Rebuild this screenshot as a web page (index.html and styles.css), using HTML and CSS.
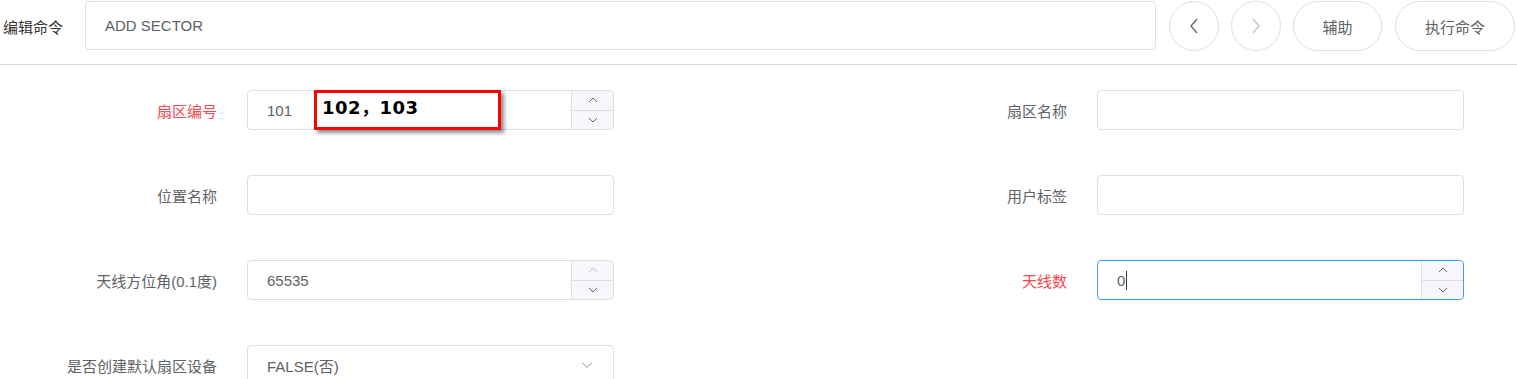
FILE: index.html
```html
<!DOCTYPE html>
<html lang="zh">
<head>
<meta charset="utf-8">
<link rel="stylesheet" href="styles.css">
</head>
<body>
<div class="topbar">
  <span class="top-label">编辑命令</span>
  <div class="cmd-input">ADD SECTOR</div>
  <button class="circle-btn"><svg width="10" height="16" viewBox="0 0 10 16"><polyline points="8,1 2,8 8,15" fill="none" stroke="#606266" stroke-width="1.3"/></svg></button>
  <button class="circle-btn disabled"><svg width="10" height="16" viewBox="0 0 10 16"><polyline points="2,1 8,8 2,15" fill="none" stroke="#c0c4cc" stroke-width="1.3"/></svg></button>
  <button class="pill-btn assist">辅助</button>
  <button class="pill-btn exec">执行命令</button>
</div>

<div class="form">
  <div class="item">
    <label class="lbl req">扇区编号</label>
    <div class="field num">
      <span class="val">101</span>
      <div class="spin">
        <span class="up"><svg width="10" height="6" viewBox="0 0 10 6"><polyline points="1,5 5,1 9,5" fill="none" stroke="#606266" stroke-width="1"/></svg></span>
        <span class="down"><svg width="10" height="6" viewBox="0 0 10 6"><polyline points="1,1 5,5 9,1" fill="none" stroke="#606266" stroke-width="1"/></svg></span>
      </div>
      <div class="note">102，103</div>
    </div>
  </div>
  <div class="item">
    <label class="lbl">扇区名称</label>
    <div class="field"></div>
  </div>

  <div class="item">
    <label class="lbl">位置名称</label>
    <div class="field"></div>
  </div>
  <div class="item">
    <label class="lbl">用户标签</label>
    <div class="field"></div>
  </div>

  <div class="item">
    <label class="lbl">天线方位角(0.1度)</label>
    <div class="field num">
      <span class="val">65535</span>
      <div class="spin">
        <span class="up"><svg width="10" height="6" viewBox="0 0 10 6"><polyline points="1,5 5,1 9,5" fill="none" stroke="#c0c4cc" stroke-width="1"/></svg></span>
        <span class="down"><svg width="10" height="6" viewBox="0 0 10 6"><polyline points="1,1 5,5 9,1" fill="none" stroke="#606266" stroke-width="1"/></svg></span>
      </div>
    </div>
  </div>
  <div class="item">
    <label class="lbl req">天线数</label>
    <div class="field num focus">
      <span class="val">0<span class="caret"></span></span>
      <div class="spin">
        <span class="up"><svg width="10" height="6" viewBox="0 0 10 6"><polyline points="1,5 5,1 9,5" fill="none" stroke="#606266" stroke-width="1"/></svg></span>
        <span class="down"><svg width="10" height="6" viewBox="0 0 10 6"><polyline points="1,1 5,5 9,1" fill="none" stroke="#606266" stroke-width="1"/></svg></span>
      </div>
    </div>
  </div>

  <div class="item">
    <label class="lbl">是否创建默认扇区设备</label>
    <div class="field select">
      <span class="val">FALSE(否)</span>
      <svg class="arrow" width="12" height="8" viewBox="0 0 12 8"><polyline points="1,1.5 6,6.5 11,1.5" fill="none" stroke="#909399" stroke-width="1"/></svg>
    </div>
  </div>
</div>
</body>
</html>
```

FILE: styles.css
```css
html, body {
  margin: 0;
  padding: 0;
  background: #fff;
  overflow: hidden;
}
body {
  font-family: "Liberation Sans", "Noto Sans CJK SC", sans-serif;
  font-size: 15px;
  color: #606266;
}
.topbar {
  display: flex;
  align-items: center;
  height: 50px;
  padding: 1px 0 13px 0;
  border-bottom: 1px solid #d9d9d9;
}
.top-label {
  width: 82px;
  padding-left: 3px;
  color: #333;
  font-size: 15px;
}
.cmd-input {
  box-sizing: border-box;
  width: 1071px;
  height: 49px;
  border: 1px solid #dcdfe6;
  border-radius: 4px;
  padding-left: 19px;
  display: flex;
  align-items: center;
  color: #606266;
  font-size: 15px;
  margin-right: 13px;
  align-self: flex-start;
}
.circle-btn {
  box-sizing: border-box;
  width: 50px;
  height: 50px;
  border-radius: 50%;
  border: 1px solid #dcdfe6;
  background: #fff;
  padding: 0;
  display: flex;
  align-items: center;
  justify-content: center;
  margin-right: 12px;
}
.pill-btn {
  box-sizing: border-box;
  height: 50px;
  border-radius: 25px;
  border: 1px solid #dcdfe6;
  background: #fff;
  font-family: inherit;
  font-size: 15px;
  color: #606266;
  padding: 0;
}
.assist {
  width: 89px;
  margin-right: 13px;
}
.exec {
  width: 120px;
}
.form {
  display: grid;
  grid-template-columns: 614px 614px;
  column-gap: 236px;
  row-gap: 45px;
  padding-top: 25px;
}
.item {
  display: flex;
  align-items: center;
  height: 40px;
}
.lbl {
  box-sizing: border-box;
  width: 247px;
  padding-right: 30px;
  text-align: right;
  color: #606266;
}
.lbl.req {
  color: #f5474c;
}
.field {
  position: relative;
  box-sizing: border-box;
  width: 367px;
  height: 40px;
  border: 1px solid #dcdfe6;
  border-radius: 4px;
  display: flex;
  align-items: center;
  padding-left: 19px;
}
.field.focus {
  border-color: #409eff;
}
.val {
  flex: 1;
  color: #606266;
  display: flex;
  align-items: center;
}
.caret {
  display: inline-block;
  width: 1px;
  height: 19px;
  background: #303133;
  margin-left: 1px;
}
.spin {
  align-self: stretch;
  width: 41px;
  border-left: 1px solid #dcdfe6;
  background: #f5f7fa;
  border-radius: 0 4px 4px 0;
  display: flex;
  flex-direction: column;
}
.spin span {
  flex: 1;
  display: flex;
  align-items: center;
  justify-content: center;
}
.spin .up {
  border-bottom: 1px solid #dcdfe6;
}
.select .arrow {
  margin-right: 20px;
}
.note {
  position: absolute;
  left: 66px;
  top: -1px;
  box-sizing: border-box;
  width: 187px;
  height: 40px;
  border: 3px solid #f00;
  background: #fff;
  box-shadow: 3px 3px 4px rgba(0, 0, 0, 0.45);
  padding-left: 5px;
  padding-top: 4px;
  font-family: "DejaVu Sans", "Noto Sans CJK SC", sans-serif;
  font-weight: bold;
  font-size: 18px;
  letter-spacing: 0.5px;
  color: #000;
  line-height: 22px;
}
```
